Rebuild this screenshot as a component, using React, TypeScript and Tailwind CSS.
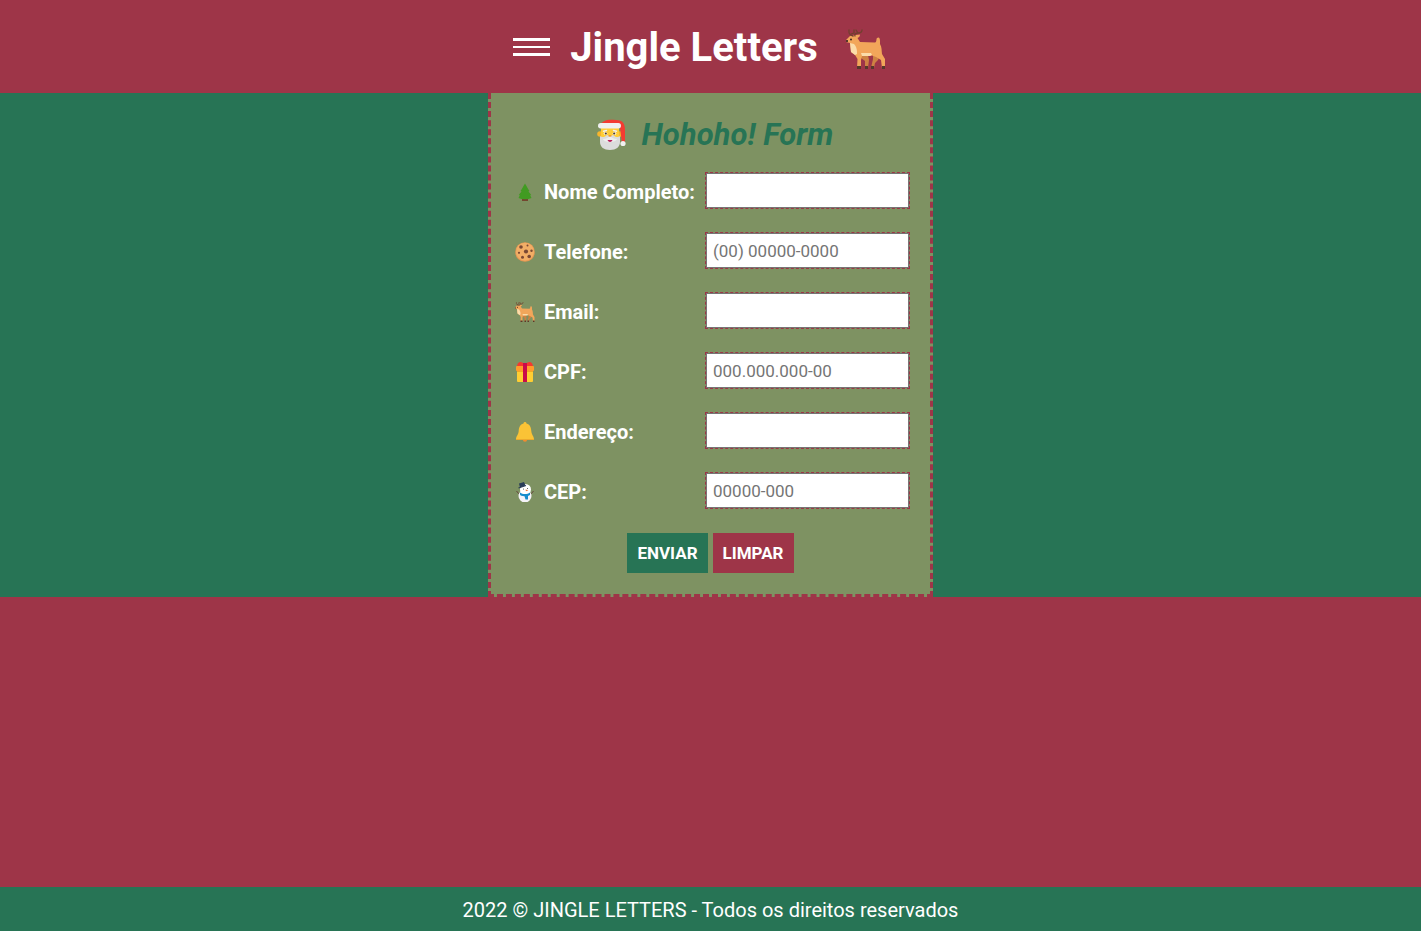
import React from "react";

type IconProps = { className?: string };

function Deer({ className }: IconProps) {
  return (
    <svg viewBox="0 0 40 40" className={className} aria-hidden="true">
      <path d="M15 26h7l1 5-1 8h-3l0-7-4-3zM27 25l7 1-2 5-3 3-1 5h-3l2-9z" fill="#ce8243" />
      <path
        d="M0 11L4 7l6-1 4-.5C14 8 12.500 8.500 11.500 9L14 13l15 .5C31 13 30 10 31 9c2-1.500 3 0 3 3v3c2 3 1.500 7 2 10l3 5v9h-3l-1-8-5-3-4-1.500L16 27l-1 4v8h-4l.5-9L9 26l-4-3-1-9-4-1z"
        fill="#f2a65a"
      />
      <path d="M4 14l4 1c3 3 3 7 3 10l-2 1-4-3z" fill="#fbdcaa" />
      <path d="M15 24h10l1 2-2 1h-8z" fill="#fbdcaa" />
      <path
        d="M7 7C2 6 3 3 3 1M5 5l3-1V1M9 7c-1-2 1-3 3-3 3 0 4-1 4-3M12 4l-2-3"
        fill="none"
        stroke="#71402e"
        strokeWidth="1.3"
        strokeLinecap="round"
      />
      <circle cx="5" cy="10.5" r="1" fill="#3d2922" />
      <path d="M0 11h2v2H0zM11 37h4v3h-4zM19 37h3v3h-3zM25 37h3v3h-3zM36 37h3v3h-3z" fill="#57382b" />
    </svg>
  );
}

function Santa({ className }: IconProps) {
  return (
    <svg viewBox="0 0 32 32" className={className} aria-hidden="true">
      <circle cx="4" cy="15" r="2.8" fill="#f7b52c" />
      <circle cx="24" cy="15" r="2.8" fill="#f7b52c" />
      <path d="M4 7C6 1 12 0 20 1c7 0 9 4 9 10v13h-3l-2-15H4z" fill="#f33b32" />
      <path d="M5 8h18v13H5z" fill="#ffcd37" />
      <path d="M4 17c2 2 5 1 7-1l3 1 3-1c2 2 5 3 7 1v6c0 5-4 8-10 8S4 28 4 23z" fill="#dcdcdc" />
      <path d="M7 20c3 0 5-1 7-3 2 2 4 3 7 3-1 4-13 4-14 0z" fill="#eeeeee" />
      <path d="M11.5 21h5c-1 2.5-4 2.5-5 0z" fill="#bb1d5a" />
      <rect x="2" y="4" width="23" height="5.5" rx="2.7" fill="#f0f0f0" />
      <circle cx="27" cy="24.5" r="2.6" fill="#f0f0f0" />
      <path d="M7.5 12.2l3-.7M17.500 11.500l3 .7" stroke="#f0f0f0" strokeWidth="1.5" strokeLinecap="round" />
      <ellipse cx="9.5" cy="14.5" rx="1.8" ry="1.3" fill="#fff" />
      <ellipse cx="18.5" cy="14.5" rx="1.8" ry="1.3" fill="#fff" />
      <circle cx="9.8" cy="14.5" r="1.1" fill="#4b382e" />
      <circle cx="18.2" cy="14.5" r="1.1" fill="#4b382e" />
      <ellipse cx="14" cy="16.8" rx="1.7" ry=".9" fill="#f19a26" />
    </svg>
  );
}

function Tree({ className }: IconProps) {
  return (
    <svg viewBox="0 0 20 20" className={className} aria-hidden="true">
      <path d="M7 16h6v3H7z" fill="#74462f" />
      <path d="M10 1.500C8 5 7 7 5.500 9l1 .3C5.500 11 4.500 12 3.800 13l1 .3L3.500 16c4 1.600 9 1.600 13 0l-1.300-2.700 1-.3c-.7-1-1.700-2-2.700-3.700l1-.3C13 7 12 5 10 1.500z" fill="#419b22" />
    </svg>
  );
}

function Cookie({ className }: IconProps) {
  return (
    <svg viewBox="0 0 20 20" className={className} aria-hidden="true">
      <circle cx="10" cy="10" r="9.8" fill="#e79752" />
      <circle cx="10" cy="9.7" r="9" fill="#f2ae66" />
      <g fill="#7a4934">
        <circle cx="6" cy="5" r="1.8" />
        <circle cx="12.5" cy="3.5" r="1" />
        <circle cx="11" cy="9.5" r="2.1" />
        <circle cx="16.5" cy="8.8" r="1.2" />
        <circle cx="4" cy="10.8" r="1.1" />
        <circle cx="7.5" cy="15.3" r="1.5" />
        <circle cx="14.2" cy="14.5" r="1.8" />
      </g>
    </svg>
  );
}

function Gift({ className }: IconProps) {
  return (
    <svg viewBox="0 0 20 20" className={className} aria-hidden="true">
      <rect x="2" y="7" width="16" height="13" rx="1" fill="#ffce32" />
      <path d="M2 8h16v2H2z" fill="#f2a720" />
      <path d="M9 5H2c0-6 5-6 7-3zm2 0h7c0-6-5-6-7-3z" fill="#f6392e" />
      <rect x="1" y="4" width="18" height="5" rx="1" fill="#ff9c2b" />
      <path d="M8 1h4v19H8z" fill="#ca0b4a" />
    </svg>
  );
}

function Bell({ className }: IconProps) {
  return (
    <svg viewBox="0 0 20 20" className={className} aria-hidden="true">
      <circle cx="10" cy="17.600" r="2.2" fill="#f38b2d" />
      <path d="M8.500 1.500c0-2 3-2 3 0 3.500 1 4.500 3.500 4.800 7.500.2 4 2.700 5 2.700 8.500H1C1 14 3.500 13 3.700 9c.3-4 1.300-6.500 4.800-7.500z" fill="#fac336" />
      <path d="M1 17h18v1H1z" fill="#eba92d" />
    </svg>
  );
}

function Snowman({ className }: IconProps) {
  return (
    <svg viewBox="0 0 20 20" className={className} aria-hidden="true">
      <path d="M4 12L1.500 9M16 12l2.500-3" stroke="#64483a" />
      <circle cx="10" cy="14" r="6.500" fill="#f4f3f8" />
      <circle cx="10.500" cy="7.500" r="5.500" fill="#fff" />
      <path d="M4 1.500L9 0l1.500 3.500L5 5.500z" fill="#283c57" />
      <path d="M3.500 6l7.500-2.500" stroke="#283c57" strokeWidth="1.200" />
      <path d="M5 10.500c3 2 7 2 10 0v2.500l-2 1v3.500h-2.500l-1-3.200C7 14 5 13.500 5 12.500z" fill="#168ccc" />
      <circle cx="8.500" cy="7" r=".5" fill="#333" />
      <circle cx="12.500" cy="6.500" r=".5" fill="#333" />
      <path d="M10.500 7.500l3 .8-2.500 1z" fill="#f37734" />
    </svg>
  );
}

const fields = [
  { id: "nome", label: "Nome Completo:", Icon: Tree, type: "text", placeholder: "" },
  { id: "telefone", label: "Telefone:", Icon: Cookie, type: "tel", placeholder: "(00) 00000-0000" },
  { id: "email", label: "Email:", Icon: Deer, type: "email", placeholder: "" },
  { id: "cpf", label: "CPF:", Icon: Gift, type: "text", placeholder: "000.000.000-00" },
  { id: "endereco", label: "Endereço:", Icon: Bell, type: "text", placeholder: "" },
  { id: "cep", label: "CEP:", Icon: Snowman, type: "text", placeholder: "00000-000" },
];

export default function App() {
  return (
    <div className="flex min-h-screen flex-col bg-[#9e3548] font-[Roboto,sans-serif] text-white">
      <header className="flex items-center justify-center px-4 py-4">
        <button type="button" aria-label="Menu" className="mr-5 flex h-6 w-[37px] flex-col justify-center gap-[5px]">
          <span className="h-[3px] w-full bg-white" />
          <span className="h-0.5 w-full bg-white" />
          <span className="h-[3px] w-full bg-white" />
        </button>
        <h1 className="pt-0.5 text-[40px] leading-[59px] font-bold">Jingle Letters</h1>
        <Deer className="mt-1 mr-[22px] ml-7 size-10" />
      </header>

      <main className="flex justify-center bg-[#277455]">
        <form
          className="border-x-[3px] border-b-[3px] border-dashed border-[#9e3548] bg-[#7e9262] px-5 pt-5 pb-[21px]"
          onSubmit={(e) => e.preventDefault()}
        >
          <h2 className="mb-4 flex items-center justify-center gap-[14px] pl-2 text-[31px] leading-[43px] font-bold text-[#277455] italic">
            <Santa className="size-8" />
            Hohoho! Form
          </h2>
          <div className="flex flex-col gap-[23px]">
            {fields.map(({ id, label, Icon, type, placeholder }) => (
              <div key={id} className="flex items-center justify-between gap-[10px]">
                <label htmlFor={id} className="flex items-center gap-[9px] pt-0.5 pl-1 text-xl font-bold">
                  <Icon className="size-5" />
                  {label}
                </label>
                <div className="border border-dashed border-[#9e3548]">
                  <input
                    id={id}
                    name={id}
                    type={type}
                    placeholder={placeholder}
                    className="block h-[35px] w-[203px] border border-[#767676] bg-white px-1.5 text-[17px] text-black outline-none placeholder:text-[#757575]"
                  />
                </div>
              </div>
            ))}
          </div>
          <div className="mt-6 flex justify-center gap-[5px]">
            <button type="submit" className="h-10 bg-[#277455] px-[10px] pt-0.5 text-[17px] font-bold">
              ENVIAR
            </button>
            <button type="reset" className="h-10 bg-[#9e3548] px-[10px] pt-0.5 text-[17px] font-bold">
              LIMPAR
            </button>
          </div>
        </form>
      </main>

      <footer className="mt-auto bg-[#277455] px-4 pt-[9px] pb-[7px] text-center text-xl">
        2022 © JINGLE LETTERS - Todos os direitos reservados
      </footer>
    </div>
  );
}
